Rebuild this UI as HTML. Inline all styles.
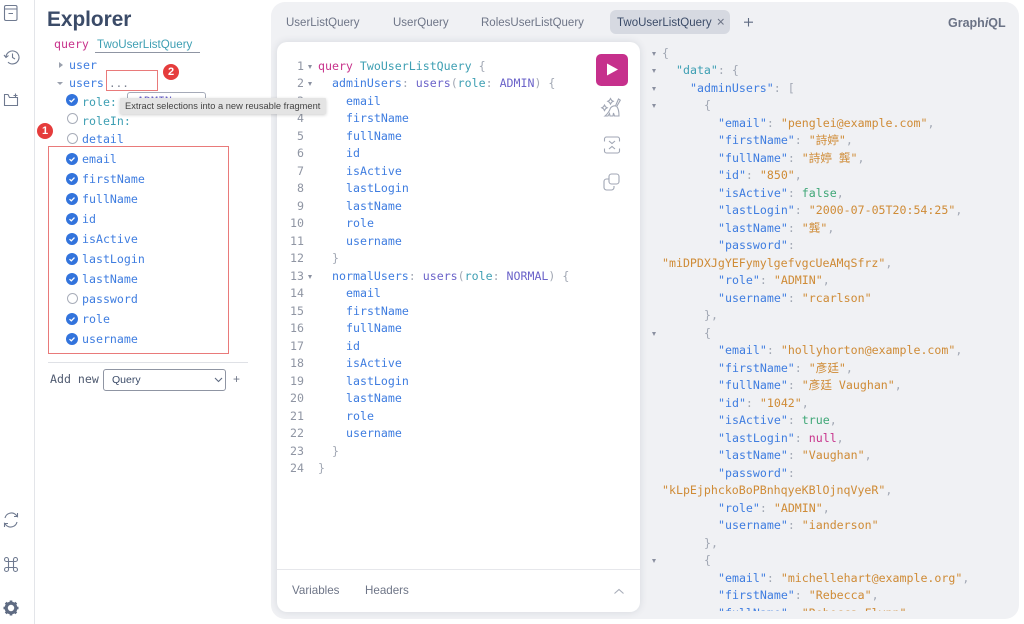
<!DOCTYPE html>
<html><head><meta charset="utf-8"><style>
html,body{margin:0;padding:0;background:#fff}
#r{position:relative;width:1024px;height:624px;overflow:hidden;background:#fff;font-family:"Liberation Sans","Noto Sans CJK TC",sans-serif}
.a{position:absolute;white-space:pre}
.m{position:absolute;white-space:pre;font:11.6px/17.5px "DejaVu Sans Mono","Noto Sans CJK TC",monospace;color:#3b4b68}
.e{position:absolute;white-space:pre;font:11.6px/17.5px "DejaVu Sans Mono","Noto Sans CJK TC",monospace;color:#9aa2b1}
.b{color:#3f7de0}.p{color:#c8348c}.t{color:#3e9fb3}.v{color:#6b63c9}.g{color:#a3a9b5}.o{color:#cf8b36}.n{color:#3fa777}
.l{position:absolute;left:284px;width:20px;text-align:right;font:11.6px/17.5px "DejaVu Sans Mono",monospace;color:#8f95a3}
.tab{position:absolute;top:15px;font-size:11.5px;line-height:16px;color:#6e7587;white-space:pre}
.f{position:absolute;left:82px;font:11.6px/16px "DejaVu Sans Mono",monospace;color:#3f7de0;white-space:pre}
.c{position:absolute;left:66px;width:12px;height:12px;border-radius:50%;background:#3273dc}
.c svg{position:absolute;left:0;top:0}
.u{position:absolute;left:67px;width:9px;height:9px;border-radius:50%;border:1px solid #a8adb9;background:#fff}
.d{position:absolute;width:0;height:0;border-left:3px solid transparent;border-right:3px solid transparent;border-top:5px solid #8a90a0}
</style></head><body><div id="r">

<div class="a" style="left:34px;top:0;width:1px;height:624px;background:#e3e5e9"></div>

<svg class="a" style="left:0;top:0" width="34" height="624" fill="none" stroke="#6f7a90" stroke-width="1.1">
<rect x="4.500" y="5.500" width="12.500" height="15" rx="1.500"/><path d="M4.500 9h12.500M8.500 13.500h4.500"/>
<path d="M6 57.500a6.500 6.500 0 1 1 2 4.600M4 55l2 2.500 2.500-2M12.500 53.500v4l2.500 1.500"/>
<path d="M4.500 94.500v11h13v-8h-8l-1.500-3zM15.500 93.500v4M13.500 95.500h4"/>
<path d="M5 518a6.500 6.500 0 0 1 11-3l1.500 1.500v-3.500M17 522a6.500 6.500 0 0 1-11 3l-1.500-1.500v3.500M17.500 516.500h-3.500M4.500 523.500h3.500"/>
<path d="M8.500 561.500h5v6h-5zM8.500 561.500v-2a2 2 0 1 0-2 2h2M13.500 561.500v-2a2 2 0 1 1 2 2h-2M8.500 567.500v2a2 2 0 1 1-2-2h2M13.500 567.500v2a2 2 0 1 0 2-2h-2"/>
<g stroke="#5f6b82"><circle cx="11" cy="608" r="4.800" stroke-width="3.200"/>
<path d="M11 600.500v2.500M11 613v2.500M3.500 608h2.500M16 608h2.500M5.700 602.700l1.800 1.800M14.500 611.500l1.800 1.800M5.700 613.300l1.800-1.800M14.500 604.500l1.800-1.800" stroke-width="2.600"/></g>
</svg>

<div class="a" style="left:47px;top:6px;font-size:20.800px;line-height:28px;font-weight:bold;color:#3b4b68">Explorer</div>
<div class="m" style="left:54px;top:36px"><span class="p">query</span></div>
<div class="a" style="left:97px;top:37px;font-size:11.6px;line-height:16px;color:#3e9fb3">TwoUserListQuery</div>
<div class="a" style="left:95px;top:52px;width:105px;height:1px;background:#8f95a3"></div>

<div class="a" style="left:59px;top:62px;width:0;height:0;border-top:3px solid transparent;border-bottom:3px solid transparent;border-left:4px solid #9aa0ad"></div>
<div class="f" style="left:69px;top:57px">user</div>
<div class="d" style="left:57px;top:82px;border-top-color:#9aa0ad;border-top-width:3px;border-left-width:3px;border-right-width:3px"></div>
<div class="f" style="left:69px;top:75px">users</div>
<div class="a" style="left:109px;top:76px;font:11px/16px 'DejaVu Sans Mono',monospace;color:#7a8090">...</div>
<div class="a" style="left:106px;top:70px;width:50px;height:19px;border:1px solid #e97a7a"></div>
<div class="a" style="left:163px;top:64px;width:16px;height:16px;border-radius:50%;background:#e53c3c;color:#fff;font-size:11px;font-weight:bold;line-height:16px;text-align:center">2</div>

<div class="c" style="top:94px"><svg width="12" height="12"><path d="M3.500 6.200l1.800 1.600 3.200-3.200" fill="none" stroke="#fff" stroke-width="1.300"/></svg></div>
<div class="f" style="top:94px;color:#3e9fb3">role:</div>
<div class="u" style="top:113px"></div>
<div class="f" style="top:113px;color:#3e9fb3">roleIn:</div>
<div class="u" style="top:133px"></div>
<div class="f" style="top:131px">detail</div>
<div class="a" style="left:37px;top:123px;width:16px;height:16px;border-radius:50%;background:#e53c3c;color:#fff;font-size:11px;font-weight:bold;line-height:16px;text-align:center">1</div>

<div class="a" style="left:48px;top:146px;width:179px;height:206px;border:1px solid #e97a7a"></div>
<div class="c" style="top:153px"><svg width="12" height="12"><path d="M3.500 6.200l1.800 1.600 3.200-3.200" fill="none" stroke="#fff" stroke-width="1.300"/></svg></div><div class="f" style="top:151px">email</div>
<div class="c" style="top:173px"><svg width="12" height="12"><path d="M3.500 6.200l1.800 1.600 3.200-3.200" fill="none" stroke="#fff" stroke-width="1.300"/></svg></div><div class="f" style="top:171px">firstName</div>
<div class="c" style="top:193px"><svg width="12" height="12"><path d="M3.500 6.200l1.800 1.600 3.200-3.200" fill="none" stroke="#fff" stroke-width="1.300"/></svg></div><div class="f" style="top:191px">fullName</div>
<div class="c" style="top:213px"><svg width="12" height="12"><path d="M3.500 6.200l1.800 1.600 3.200-3.200" fill="none" stroke="#fff" stroke-width="1.300"/></svg></div><div class="f" style="top:211px">id</div>
<div class="c" style="top:233px"><svg width="12" height="12"><path d="M3.500 6.200l1.800 1.600 3.200-3.200" fill="none" stroke="#fff" stroke-width="1.300"/></svg></div><div class="f" style="top:231px">isActive</div>
<div class="c" style="top:253px"><svg width="12" height="12"><path d="M3.500 6.200l1.800 1.600 3.200-3.200" fill="none" stroke="#fff" stroke-width="1.300"/></svg></div><div class="f" style="top:251px">lastLogin</div>
<div class="c" style="top:273px"><svg width="12" height="12"><path d="M3.500 6.200l1.800 1.600 3.200-3.200" fill="none" stroke="#fff" stroke-width="1.300"/></svg></div><div class="f" style="top:271px">lastName</div>
<div class="u" style="top:293px"></div><div class="f" style="top:291px">password</div>
<div class="c" style="top:313px"><svg width="12" height="12"><path d="M3.500 6.200l1.800 1.600 3.200-3.200" fill="none" stroke="#fff" stroke-width="1.300"/></svg></div><div class="f" style="top:311px">role</div>
<div class="c" style="top:333px"><svg width="12" height="12"><path d="M3.500 6.200l1.800 1.600 3.200-3.200" fill="none" stroke="#fff" stroke-width="1.300"/></svg></div><div class="f" style="top:331px">username</div>

<div class="a" style="left:48px;top:362px;width:200px;height:1px;background:#dfe1e6"></div>
<div class="f" style="left:50px;top:371px;color:#4f5a70">Add new</div>
<div class="a" style="left:103px;top:369px;width:121px;height:20px;border:1px solid #8f95a3;border-radius:3px;background:#fff;font-size:10.500px;line-height:20px;color:#3b4b68;text-indent:8px">Query</div>
<svg class="a" style="left:214px;top:376px" width="10" height="8"><path d="M1 2l3.500 3.500L8 2" fill="none" stroke="#5f6b82" stroke-width="1.100"/></svg>
<div class="a" style="left:233px;top:371px;font-size:12px;line-height:16px;color:#6e7587">+</div>

<div class="a" style="left:271px;top:2px;width:748px;height:617px;border-radius:14px;background:#f0f1f4"></div>
<div class="tab" style="left:286px">UserListQuery</div>
<div class="tab" style="left:393px">UserQuery</div>
<div class="tab" style="left:481px">RolesUserListQuery</div>
<div class="a" style="left:610px;top:10px;width:120px;height:24px;border-radius:6px;background:#d6d9e1"></div>
<div class="tab" style="left:617px;color:#3b4b68">TwoUserListQuery</div>
<svg class="a" style="left:717px;top:18px" width="8" height="8"><path d="M1 1l5.500 5.500M6.500 1L1 6.500" stroke="#6e7587" fill="none"/></svg>
<svg class="a" style="left:743px;top:17px" width="11" height="11"><path d="M5.500 1v8.500M1 5.200h9" stroke="#5f6b82" stroke-width="1.100" fill="none"/></svg>
<div class="a" style="left:948px;top:14px;font-size:12.500px;line-height:18px;font-weight:bold;color:#6a7285">Graph<i>i</i>QL</div>

<div class="a" style="left:277px;top:42px;width:363px;height:570px;border-radius:10px;background:#fff;box-shadow:0 0 8px rgba(60,70,90,.14)"></div>
<div class="l" style="top:58px">1</div>
<div class="l" style="top:75px">2</div>
<div class="l" style="top:93px">3</div>
<div class="l" style="top:110px">4</div>
<div class="l" style="top:128px">5</div>
<div class="l" style="top:145px">6</div>
<div class="l" style="top:163px">7</div>
<div class="l" style="top:180px">8</div>
<div class="l" style="top:198px">9</div>
<div class="l" style="top:215px">10</div>
<div class="l" style="top:233px">11</div>
<div class="l" style="top:250px">12</div>
<div class="l" style="top:268px">13</div>
<div class="l" style="top:285px">14</div>
<div class="l" style="top:303px">15</div>
<div class="l" style="top:320px">16</div>
<div class="l" style="top:338px">17</div>
<div class="l" style="top:355px">18</div>
<div class="l" style="top:373px">19</div>
<div class="l" style="top:390px">20</div>
<div class="l" style="top:408px">21</div>
<div class="l" style="top:425px">22</div>
<div class="l" style="top:443px">23</div>
<div class="l" style="top:460px">24</div>
<div class="d" style="left:308px;top:65px;border-top-width:4px;border-left-width:2.500px;border-right-width:2.500px"></div>
<div class="d" style="left:308px;top:82px;border-top-width:4px;border-left-width:2.500px;border-right-width:2.500px"></div>
<div class="d" style="left:308px;top:275px;border-top-width:4px;border-left-width:2.500px;border-right-width:2.500px"></div>

<div class="e" style="left:318px;top:58px"><span class="p">query</span> <span class="t">TwoUserListQuery</span> <span class="g">{</span></div>
<div class="e" style="left:332px;top:75px"><span class="b">adminUsers</span><span class="g">:</span> <span class="v">users</span><span class="g">(</span><span class="t">role</span><span class="g">:</span> <span class="v">ADMIN</span><span class="g">) {</span></div>
<div class="e b" style="left:346px;top:93px">email</div>
<div class="e b" style="left:346px;top:110px">firstName</div>
<div class="e b" style="left:346px;top:128px">fullName</div>
<div class="e b" style="left:346px;top:145px">id</div>
<div class="e b" style="left:346px;top:163px">isActive</div>
<div class="e b" style="left:346px;top:180px">lastLogin</div>
<div class="e b" style="left:346px;top:198px">lastName</div>
<div class="e b" style="left:346px;top:215px">role</div>
<div class="e b" style="left:346px;top:233px">username</div>
<div class="e g" style="left:332px;top:250px">}</div>
<div class="e" style="left:332px;top:268px"><span class="b">normalUsers</span><span class="g">:</span> <span class="v">users</span><span class="g">(</span><span class="t">role</span><span class="g">:</span> <span class="v">NORMAL</span><span class="g">) {</span></div>
<div class="e b" style="left:346px;top:285px">email</div>
<div class="e b" style="left:346px;top:303px">firstName</div>
<div class="e b" style="left:346px;top:320px">fullName</div>
<div class="e b" style="left:346px;top:338px">id</div>
<div class="e b" style="left:346px;top:355px">isActive</div>
<div class="e b" style="left:346px;top:373px">lastLogin</div>
<div class="e b" style="left:346px;top:390px">lastName</div>
<div class="e b" style="left:346px;top:408px">role</div>
<div class="e b" style="left:346px;top:425px">username</div>
<div class="e g" style="left:332px;top:443px">}</div>
<div class="e g" style="left:318px;top:460px">}</div>

<div class="a" style="left:596px;top:54px;width:32px;height:32px;border-radius:5px;background:#c6308c"></div>
<svg class="a" style="left:596px;top:54px" width="32" height="32"><path d="M11 9.500v12l11-6z" fill="#fff"/></svg>
<svg class="a" style="left:600px;top:96px" width="26" height="100" fill="none" stroke="#a0a6b4" stroke-width="1.100">
<path d="M18.500 3l1.800 1.200-3.600 6.300c1.500 1.500 2.300 5 2.300 9.500h-4.500l-1-3-.5 3h-3l-.5-2.500-1.500 2.500h-3c2.500-2 4.500-5 5.500-8 1.500-2 4-2.500 5-2z"/>
<path d="M10.500 2.500l1 1.800 1.800 1-1.800 1-1 1.800-1-1.800-1.800-1 1.800-1zM4.500 9l1 1.800 1.800 1-1.800 1-1 1.800-1-1.800-1.800-1 1.800-1z"/>
<path d="M4.500 45.500v-2.500a2 2 0 0 1 2-2h11a2 2 0 0 1 2 2v2.500M4.500 52.500v2.500a2 2 0 0 0 2 2h11a2 2 0 0 0 2-2v-2.500M9 45l3 2.500 3-2.500M9 53l3-2.500 3 2.500"/>
<rect x="9" y="78" width="10" height="10" rx="2.500"/><path d="M9 83h-2.500a2.500 2.500 0 0 0-2.500 2.500v6a2.500 2.500 0 0 0 2.500 2.500h5a2.500 2.500 0 0 0 2.500-2.500v-1.500"/>
</svg>

<div class="a" style="left:277px;top:569px;width:363px;height:1px;background:#e6e7eb"></div>
<div class="a" style="left:292px;top:583px;font-size:11.600px;line-height:16px;color:#6e7587">Variables</div>
<div class="a" style="left:365px;top:583px;font-size:11.600px;line-height:16px;color:#6e7587">Headers</div>
<svg class="a" style="left:613px;top:587px" width="13" height="9"><path d="M1.500 6.500l4.500-4 4.500 4" fill="none" stroke="#a8adb9" stroke-width="1.100"/></svg>

<div class="a" style="left:650px;top:44px;width:369px;height:567px;overflow:hidden">
<div class="d" style="left:2px;top:8px;border-top-width:4px;border-left-width:2.500px;border-right-width:2.500px"></div>
<div class="d" style="left:2px;top:25px;border-top-width:4px;border-left-width:2.500px;border-right-width:2.500px"></div>
<div class="d" style="left:2px;top:43px;border-top-width:4px;border-left-width:2.500px;border-right-width:2.500px"></div>
<div class="d" style="left:2px;top:60px;border-top-width:4px;border-left-width:2.500px;border-right-width:2.500px"></div>
<div class="d" style="left:2px;top:288px;border-top-width:4px;border-left-width:2.500px;border-right-width:2.500px"></div>
<div class="d" style="left:2px;top:515px;border-top-width:4px;border-left-width:2.500px;border-right-width:2.500px"></div>
<div class="e g" style="left:12px;top:1px">{</div>
<div class="e" style="left:26px;top:18px"><span class="t">"data"</span><span class="g">: {</span></div>
<div class="e" style="left:40px;top:36px"><span class="b">"adminUsers"</span><span class="g">: [</span></div>
<div class="e g" style="left:54px;top:53px">{</div>
<div class="e" style="left:68px;top:71px"><span class="b">"email"</span><span class="g">:</span> <span class="o">"penglei@example.com"</span><span class="g">,</span></div>
<div class="e" style="left:68px;top:88px"><span class="b">"firstName"</span><span class="g">:</span> <span class="o">"詩婷"</span><span class="g">,</span></div>
<div class="e" style="left:68px;top:106px"><span class="b">"fullName"</span><span class="g">:</span> <span class="o">"詩婷 龔"</span><span class="g">,</span></div>
<div class="e" style="left:68px;top:123px"><span class="b">"id"</span><span class="g">:</span> <span class="o">"850"</span><span class="g">,</span></div>
<div class="e" style="left:68px;top:141px"><span class="b">"isActive"</span><span class="g">:</span> <span class="n">false</span><span class="g">,</span></div>
<div class="e" style="left:68px;top:158px"><span class="b">"lastLogin"</span><span class="g">:</span> <span class="o">"2000-07-05T20:54:25"</span><span class="g">,</span></div>
<div class="e" style="left:68px;top:176px"><span class="b">"lastName"</span><span class="g">:</span> <span class="o">"龔"</span><span class="g">,</span></div>
<div class="e" style="left:68px;top:193px"><span class="b">"password"</span><span class="g">:</span></div>
<div class="e" style="left:12px;top:211px"><span class="o">"miDPDXJgYEFymylgefvgcUeAMqSfrz"</span><span class="g">,</span></div>
<div class="e" style="left:68px;top:228px"><span class="b">"role"</span><span class="g">:</span> <span class="o">"ADMIN"</span><span class="g">,</span></div>
<div class="e" style="left:68px;top:246px"><span class="b">"username"</span><span class="g">:</span> <span class="o">"rcarlson"</span></div>
<div class="e g" style="left:54px;top:263px">},</div>
<div class="e g" style="left:54px;top:281px">{</div>
<div class="e" style="left:68px;top:298px"><span class="b">"email"</span><span class="g">:</span> <span class="o">"hollyhorton@example.com"</span><span class="g">,</span></div>
<div class="e" style="left:68px;top:316px"><span class="b">"firstName"</span><span class="g">:</span> <span class="o">"彥廷"</span><span class="g">,</span></div>
<div class="e" style="left:68px;top:333px"><span class="b">"fullName"</span><span class="g">:</span> <span class="o">"彥廷 Vaughan"</span><span class="g">,</span></div>
<div class="e" style="left:68px;top:351px"><span class="b">"id"</span><span class="g">:</span> <span class="o">"1042"</span><span class="g">,</span></div>
<div class="e" style="left:68px;top:368px"><span class="b">"isActive"</span><span class="g">:</span> <span class="n">true</span><span class="g">,</span></div>
<div class="e" style="left:68px;top:386px"><span class="b">"lastLogin"</span><span class="g">:</span> <span class="p">null</span><span class="g">,</span></div>
<div class="e" style="left:68px;top:403px"><span class="b">"lastName"</span><span class="g">:</span> <span class="o">"Vaughan"</span><span class="g">,</span></div>
<div class="e" style="left:68px;top:421px"><span class="b">"password"</span><span class="g">:</span></div>
<div class="e" style="left:12px;top:438px"><span class="o">"kLpEjphckoBoPBnhqyeKBlOjnqVyeR"</span><span class="g">,</span></div>
<div class="e" style="left:68px;top:456px"><span class="b">"role"</span><span class="g">:</span> <span class="o">"ADMIN"</span><span class="g">,</span></div>
<div class="e" style="left:68px;top:473px"><span class="b">"username"</span><span class="g">:</span> <span class="o">"ianderson"</span></div>
<div class="e g" style="left:54px;top:491px">},</div>
<div class="e g" style="left:54px;top:508px">{</div>
<div class="e" style="left:68px;top:526px"><span class="b">"email"</span><span class="g">:</span> <span class="o">"michellehart@example.org"</span><span class="g">,</span></div>
<div class="e" style="left:68px;top:543px"><span class="b">"firstName"</span><span class="g">:</span> <span class="o">"Rebecca"</span><span class="g">,</span></div>
<div class="e" style="left:68px;top:561px"><span class="b">"fullName"</span><span class="g">:</span> <span class="o">"Rebecca Flynn"</span><span class="g">,</span></div>
</div>

<div class="a" style="left:127px;top:92px;width:77px;height:16px;border:1px solid #a5aab8;border-radius:3px;background:#fff;overflow:hidden;font:11.600px/16px 'DejaVu Sans Mono',monospace;color:#6b63c9;text-indent:9px">ADMIN</div>
<div class="a" style="left:120px;top:98px;width:206px;height:16px;background:#e4e4e4;box-shadow:0 1px 3px rgba(0,0,0,.2);border-radius:1px;font-size:9.300px;line-height:16px;color:#444;text-indent:5px">Extract selections into a new reusable fragment</div>

</div></body></html>
